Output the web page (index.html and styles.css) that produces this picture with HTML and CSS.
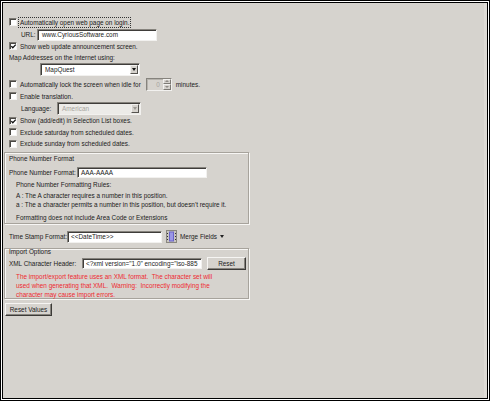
FILE: index.html
```html
<!DOCTYPE html>
<html lang="en">
<head>
  <meta charset="UTF-8" />
  <title>Options</title>
  <link rel="stylesheet" href="styles.css">
</head>
<body>
  <div class="window">
    <div class="panel">

      <div class="row r1">
        <span class="cb"></span>
        <span class="focus">Automatically open web page on login.</span>
      </div>
      <div class="row r2 indent">
        <span class="lbl w-url">URL:</span>
        <span class="input url">www.CyriousSoftware.com</span>
      </div>
      <div class="row r3">
        <span class="cb checked"><svg viewBox="0 0 8 8"><polyline points="1.5,3.5 3.2,5.4 6.6,1.8" /></svg></span>
        <span>Show web update announcement screen.</span>
      </div>
      <div class="row r4">
        <span>Map Addresses on the Internet using:</span>
      </div>
      <div class="row r5">
        <span class="select map"><span class="val">MapQuest</span><span class="drop"><i></i></span></span>
      </div>
      <div class="row r6">
        <span class="cb"></span>
        <span>Automatically lock the screen when idle for</span>
        <span class="spin"><span class="val">0</span><span class="arrows"><b class="up"></b><b class="down"></b></span></span>
        <span class="after-spin">minutes.</span>
      </div>
      <div class="row r7">
        <span class="cb"></span>
        <span>Enable translation.</span>
      </div>
      <div class="row r8 indent">
        <span class="lbl w-lang">Language:</span>
        <span class="select lang disabled"><span class="val">American</span><span class="drop"><i></i></span></span>
      </div>
      <div class="row r9">
        <span class="cb checked"><svg viewBox="0 0 8 8"><polyline points="1.5,3.5 3.2,5.4 6.6,1.8" /></svg></span>
        <span>Show (add/edit) in Selection List boxes.</span>
      </div>
      <div class="row r10">
        <span class="cb"></span>
        <span>Exclude saturday from scheduled dates.</span>
      </div>
      <div class="row r11">
        <span class="cb"></span>
        <span>Exclude sunday from scheduled dates.</span>
      </div>

      <div class="group phone">
        <div class="legend">Phone Number Format</div>
        <div class="row g-input">
          <span class="lbl w-phone">Phone Number Format:</span>
          <span class="input phone-in">AAA-AAAA</span>
        </div>
        <div class="rules">
          <div class="rule-title">Phone Number Formatting Rules:</div>
          <div class="rule r-a">A : The A character requires a number in this position.</div>
          <div class="rule r-b">a : The a character permits a number in this position, but doesn't require it.</div>
          <div class="rule r-c">Formatting does not include Area Code or Extensions</div>
        </div>
      </div>

      <div class="row stamp">
        <span class="lbl w-stamp">Time Stamp Format:</span>
        <span class="input stamp-in">&lt;&lt;DateTime&gt;&gt;</span>
        <span class="merge-icon">
          <svg viewBox="0 0 11 13" width="11" height="13">
            <rect x="0.5" y="0.5" width="10" height="12" fill="#c9c6c0" stroke="#8a877f" />
            <rect x="3" y="1.5" width="5" height="10" fill="#6a64c8" />
            <rect x="4" y="2.5" width="3" height="8" fill="#9b97e6" />
            <rect x="1" y="3" width="1" height="1" fill="#333" />
            <rect x="1" y="6" width="1" height="1" fill="#333" />
            <rect x="1" y="9" width="1" height="1" fill="#333" />
            <rect x="9" y="3" width="1" height="1" fill="#333" />
            <rect x="9" y="6" width="1" height="1" fill="#333" />
            <rect x="9" y="9" width="1" height="1" fill="#333" />
          </svg>
        </span>
        <span class="merge">Merge Fields</span>
        <span class="caret"></span>
      </div>

      <div class="group import">
        <div class="legend">Import Options</div>
        <div class="row g-xml">
          <span class="lbl w-xml">XML Character Header:</span>
          <span class="input xml-in">&lt;?xml version="1.0" encoding="iso-885</span>
          <span class="button reset">Reset</span>
        </div>
        <div class="warn">
          The import/export feature uses an XML format.&nbsp; The character set will<br>
          used when generating that XML.&nbsp; Warning:&nbsp; Incorrectly modifying the<br>
          character may cause import errors.
        </div>
      </div>

      <div class="row bottom">
        <span class="button reset-values">Reset Values</span>
      </div>

    </div>
  </div>
</body>
</html>
```

FILE: styles.css
```css
* {
  box-sizing: border-box;
  margin: 0;
  padding: 0;
}

body {
  width: 490px;
  height: 401px;
  overflow: hidden;
  font-family: 'Liberation Sans', Arial, sans-serif;
  font-size: 6.4px;
  color: #1b1b1b;
  background: #d4d0c8;
}

.window {
  height: 401px;
  border: 1px solid #000;
  padding: 1px;
  background: #fff;
}

.panel {
  height: 100%;
  border: 1px solid #000;
  background: #d6d3ce;
  padding: 13px 0 0 1px;
  border-right-color: #000;
  box-shadow: inset -3px 0 0 #dedbd6;
}

.row {
  display: flex;
  align-items: center;
  padding-left: 5px;
  white-space: nowrap;
}

.indent {
  padding-left: 17px;
}

.r1 { height: 12px; }
.r2 { height: 13px; }
.r3 { height: 10px; }
.r4 { height: 12px; }
.r5 { height: 14px; padding-left: 36px; }
.r6 { height: 14px; }
.r7 { height: 10px; }
.r8 { height: 14px; }
.r9 { height: 11px; }
.r10 { height: 12px; }
.r11 { height: 11px; }

/* checkbox */
.cb {
  width: 8px;
  height: 8px;
  margin-right: 3px;
  background: #fff;
  border: 1px solid;
  border-color: #7d7a74 #f4f3f1 #f4f3f1 #7d7a74;
  box-shadow: inset 1px 1px 0 #4a4844;
  flex: none;
  position: relative;
}

.cb svg {
  position: absolute;
  left: 0;
  top: 0;
  width: 7px;
  height: 7px;
}

.cb polyline {
  fill: none;
  stroke: #111;
  stroke-width: 1.4;
}

.focus {
  outline: 1px dotted #333;
  outline-offset: 1px;
}

.lbl {
  flex: none;
}

.w-url { width: 16px; }
.w-lang { width: 36px; }
.w-phone { width: 68px; }
.w-stamp { width: 58px; }
.w-xml { width: 73px; }

/* text boxes */
.input {
  display: flex;
  align-items: center;
  height: 12px;
  padding-left: 3px;
  background: #fff;
  border: 1px solid;
  border-color: #86837d #f2f1ef #f2f1ef #86837d;
  box-shadow: inset 1px 1px 0 #3f3d3a;
  overflow: hidden;
  flex: none;
}

.url { width: 120px; padding-left: 4px; }
.phone-in { width: 130px; height: 11px; }
.stamp-in { width: 95px; }
.xml-in { width: 120px; height: 11px; }

/* dropdowns */
.select {
  display: flex;
  align-items: stretch;
  height: 13px;
  background: #fff;
  border: 1px solid;
  border-color: #86837d #f2f1ef #f2f1ef #86837d;
  box-shadow: inset 1px 1px 0 #3f3d3a;
  padding: 1px 1px 1px 1px;
}

.select .val {
  flex: 1;
  display: flex;
  align-items: center;
  padding-left: 3px;
}

.map { width: 100px; margin-top: -1px; }
.lang { width: 84px; }

.select.disabled {
  background: #ecebe8;
}

.select.disabled .val {
  color: #a8a5a0;
}

.drop {
  width: 8px;
  background: #d6d3ce;
  border: 1px solid;
  border-color: #f2f1ef #55534f #55534f #f2f1ef;
  display: flex;
  align-items: center;
  justify-content: center;
}

.drop i {
  width: 0;
  height: 0;
  border-left: 2.5px solid transparent;
  border-right: 2.5px solid transparent;
  border-top: 3px solid #111;
}

.disabled .drop i {
  border-top-color: #9a9792;
}

/* spinner */
.spin {
  display: flex;
  width: 26px;
  height: 13px;
  margin-left: 5px;
  background: #d6d3ce;
  border: 1px solid;
  border-color: #86837d #f2f1ef #f2f1ef #86837d;
  box-shadow: inset 1px 1px 0 #b6b3ad;
}

.spin .val {
  flex: 1;
  text-align: right;
  padding-right: 3px;
  line-height: 11px;
  color: #a8a5a0;
}

.arrows {
  width: 8px;
  display: flex;
  flex-direction: column;
}

.arrows b {
  flex: 1;
  display: flex;
  align-items: center;
  justify-content: center;
  border: 1px solid;
  border-color: #f2f1ef #7d7a74 #7d7a74 #f2f1ef;
}

.arrows b::after {
  content: "";
  border-left: 2px solid transparent;
  border-right: 2px solid transparent;
}

.arrows .up::after { border-bottom: 2px solid #8f8c86; }
.arrows .down::after { border-top: 2px solid #8f8c86; }

.after-spin {
  margin-left: 4px;
}

/* group boxes */
.group {
  width: 245px;
  border: 1px solid #a7a39c;
  box-shadow: inset 1px 1px 0 #f7f6f4, 1px 1px 0 #f7f6f4;
}

.phone {
  margin-top: 3px;
  height: 72px;
}

.legend {
  padding-left: 4px;
  height: 12px;
  line-height: 12px;
}

.g-input {
  height: 14px;
  padding-left: 4px;
}

.rules {
  padding-left: 11px;
}

.rule-title {
  height: 12px;
  line-height: 12px;
}

.r-a { height: 10px; line-height: 10px; }
.r-b { height: 8px; line-height: 8px; }
.r-c { height: 11px; line-height: 11px; margin-top: 3px; }

.stamp {
  margin-top: 6px;
  height: 13px;
  padding-left: 5px;
}

.merge-icon {
  display: flex;
  margin-left: 4px;
}

.merge {
  margin-left: 3px;
}

.caret {
  margin-left: 3px;
  border-left: 2.5px solid transparent;
  border-right: 2.5px solid transparent;
  border-top: 3px solid #222;
}

.import {
  margin-top: 5px;
  height: 51px;
}

.import .legend {
  height: 7px;
  line-height: 6px;
}

.g-xml {
  height: 14px;
  padding-left: 4px;
}

.button {
  display: flex;
  align-items: center;
  justify-content: center;
  background: #d6d3ce;
  border: 1px solid;
  border-color: #f6f5f3 #3c3a37 #3c3a37 #f6f5f3;
  box-shadow: inset -1px -1px 0 #87847e;
  flex: none;
}

.reset {
  width: 39px;
  height: 13px;
  margin-left: 5px;
}

.warn {
  margin-top: 2px;
  padding-left: 11px;
  line-height: 9px;
  color: #ee2a31;
  white-space: nowrap;
}

.bottom {
  margin-top: 4px;
  padding-left: 1px;
}

.reset-values {
  width: 47px;
  height: 13px;
}
```
